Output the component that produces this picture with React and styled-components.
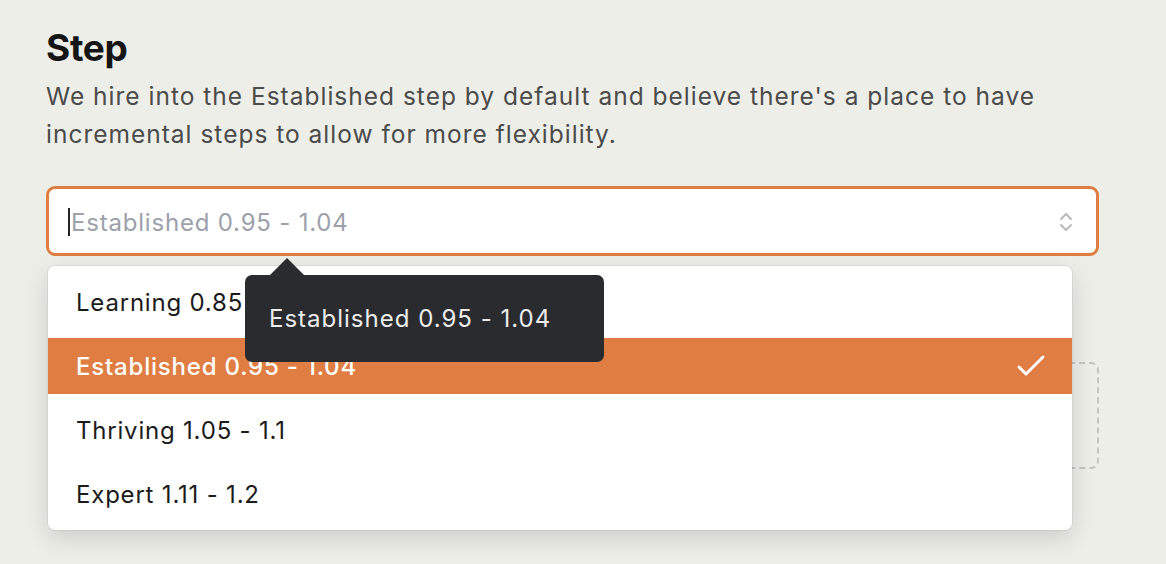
import styled, { createGlobalStyle } from "styled-components";

const options = [
  { label: "Learning 0.85 - 0.94" },
  { label: "Established 0.95 - 1.04", selected: true },
  { label: "Thriving 1.05 - 1.1" },
  { label: "Expert 1.11 - 1.2" },
];

export default function App() {
  return (
    <>
      <GlobalStyle />
      <Page>
        <Heading>Step</Heading>
        <Description>
          We hire into the Established step by default and believe there's a place to have
          incremental steps to allow for more flexibility.
        </Description>
        <Field>
          <SelectBox>
            <Caret />
            <Placeholder>Established 0.95 - 1.04</Placeholder>
            <svg width="16" height="24" viewBox="0 0 16 24" fill="none">
              <path d="M3 9l5-5 5 5M3 15l5 5 5-5" stroke="#b9b9b9" strokeWidth="2" strokeLinecap="round" strokeLinejoin="round" />
            </svg>
          </SelectBox>
          <Below>
            <DashedBox />
            <Menu>
              {options.map((o) => (
                <Option key={o.label} $selected={o.selected}>
                  <span>{o.label}</span>
                  {o.selected && (
                    <svg width="30" height="24" viewBox="0 0 30 24" fill="none">
                      <path d="M3 13l7 7L27 3" stroke="#fff" strokeWidth="3" strokeLinecap="round" strokeLinejoin="round" />
                    </svg>
                  )}
                </Option>
              ))}
            </Menu>
            <Tooltip>Established 0.95 - 1.04</Tooltip>
          </Below>
        </Field>
      </Page>
    </>
  );
}

const GlobalStyle = createGlobalStyle`
  body {
    margin: 0;
    background: #eeeee9;
    font-family: Inter, "Noto Sans", sans-serif;
  }
`;

const Page = styled.div`
  padding: 24px 67px 0 46px;
  height: 564px;
  box-sizing: border-box;
  overflow: hidden;
`;

const Heading = styled.h1`
  margin: 0;
  font-size: 37px;
  font-weight: 700;
  color: #151515;
  letter-spacing: -0.3px;
  line-height: 48px;
`;

const Description = styled.p`
  margin: 5px 0 0;
  font-size: 24.5px;
  letter-spacing: 1px;
  line-height: 38px;
  color: #4b4b4b;
  max-width: 1010px;
`;

const Field = styled.div`
  margin-top: 33px;
`;

const SelectBox = styled.div`
  height: 70px;
  box-sizing: border-box;
  border: 3px solid #e07d42;
  border-radius: 9px;
  background: #fff;
  display: flex;
  align-items: center;
  padding: 2px 22px 0 19px;
`;

const Caret = styled.span`
  width: 2px;
  height: 28px;
  background: #222;
`;

const Placeholder = styled.span`
  flex: 1;
  font-size: 24px;
  letter-spacing: 0.8px;
  color: #9ca1aa;
  margin-left: 1px;
`;

const Below = styled.div`
  position: relative;
  padding-top: 10px;
`;

const DashedBox = styled.div`
  position: absolute;
  top: 106px;
  right: 0;
  width: 60px;
  height: 107px;
  border: 2px dashed #c4c4c0;
  border-left: none;
  border-radius: 0 8px 8px 0;
  box-sizing: border-box;
`;

const Menu = styled.ul`
  position: relative;
  list-style: none;
  margin: 0 27px 0 2px;
  padding: 8px 0;
  background: #fff;
  border-radius: 7px;
  box-shadow: 0 8px 24px rgba(0, 0, 0, 0.14), 0 0 0 1px rgba(0, 0, 0, 0.05);
  display: flex;
  flex-direction: column;
  gap: 8px;
`;

const Option = styled.li`
  height: 56px;
  display: flex;
  align-items: center;
  justify-content: space-between;
  padding: 0 26px 0 28px;
  font-size: 24px;
  letter-spacing: 0.8px;
  color: ${(p) => (p.$selected ? "#fff" : "#1b1b1b")};
  background: ${(p) => (p.$selected ? "#e07d42" : "transparent")};
  font-weight: ${(p) => (p.$selected ? 500 : 400)};
`;

const Tooltip = styled.div`
  position: absolute;
  top: 19px;
  left: 199px;
  width: 359px;
  height: 87px;
  box-sizing: border-box;
  background: #2a2b2f;
  border-radius: 7px;
  color: #ececec;
  font-size: 24px;
  letter-spacing: 1px;
  display: flex;
  align-items: center;
  padding-left: 24px;
  &::before {
    content: "";
    position: absolute;
    top: -17px;
    left: 25px;
    border: 17px solid transparent;
    border-top: none;
    border-bottom-color: #2a2b2f;
  }
`;
